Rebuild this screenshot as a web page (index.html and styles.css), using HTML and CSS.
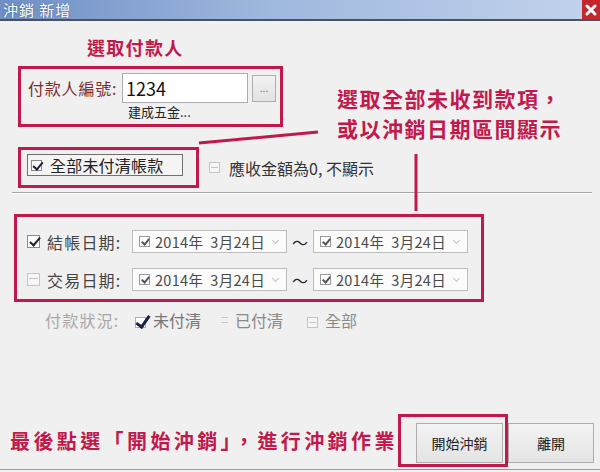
FILE: index.html
```html
<!DOCTYPE html>
<html lang="zh-Hant">
<head>
    <meta charset="UTF-8">
    <title>沖銷 新增</title>
    <link rel="stylesheet" href="styles.css">
</head>
<body>
    <div class="window">
        <div class="titlebar">
            <span class="title">沖銷 新增</span>
            <span class="close">
                <svg width="12" height="12" viewBox="0 0 12 12"><path d="M2 2 L10 10 M10 2 L2 10" stroke="#fff" stroke-width="3" stroke-linecap="round"/></svg>
            </span>
        </div>

        <div class="content">
            <div class="note note-payer">選取付款人</div>

            <div class="mark payer-box">
                <div class="payer-row">
                    <label class="payer-label" for="payer">付款人編號:</label>
                    <input class="text-input" id="payer" type="text" value="1234">
                    <button class="dots">...</button>
                </div>
                <div class="payer-name">建成五金...</div>
            </div>

            <div class="unpaid-row">
                <div class="mark unpaid-box">
                    <div class="toggle"><span class="cb checked"></span>全部未付清帳款</div>
                </div>
                <div class="option"><span class="cb dash"></span>應收金額為0, 不顯示</div>
            </div>

            <div class="sep"></div>

            <div class="mark date-box">
                <div class="date-row">
                    <span class="cb checked"></span>
                    <span class="date-label">結帳日期:</span>
                    <div class="picker"><span class="cb small checked"></span><span class="date">2014年&nbsp; 3月24日</span><span class="chev"></span></div>
                    <span class="tilde">～</span>
                    <div class="picker"><span class="cb small checked"></span><span class="date">2014年&nbsp; 3月24日</span><span class="chev"></span></div>
                </div>
                <div class="date-row">
                    <span class="cb dash"></span>
                    <span class="date-label">交易日期:</span>
                    <div class="picker"><span class="cb small checked"></span><span class="date">2014年&nbsp; 3月24日</span><span class="chev"></span></div>
                    <span class="tilde">～</span>
                    <div class="picker"><span class="cb small checked"></span><span class="date">2014年&nbsp; 3月24日</span><span class="chev"></span></div>
                </div>
            </div>

            <div class="status-row">
                <span class="status-label">付款狀況:</span>
                <span class="cb bold-check"></span>
                <span class="status-item first">未付清</span>
                <span class="eq"></span>
                <span class="status-item">已付清</span>
                <span class="cb dash faint"></span>
                <span class="status-item">全部</span>
            </div>

            <div class="footer">
                <div class="note note-final">最後點選「開始沖銷」，進行沖銷作業</div>
                <div class="mark start-box"><button class="btn">開始沖銷</button></div>
                <button class="btn btn-exit">離開</button>
            </div>
            <div class="bottom-line"></div>
        </div>

        <div class="note note-range">選取全部未收到款項，<br>或以沖銷日期區間顯示</div>
        <svg class="leaders" width="600" height="472">
            <line x1="199" y1="143" x2="318" y2="132" stroke="#c2194c" stroke-width="3"/>
            <line x1="416" y1="154" x2="416" y2="211" stroke="#c2194c" stroke-width="3"/>
        </svg>
    </div>
</body>
</html>
```

FILE: styles.css
```css
body {
    margin: 0;
    background-color: #f0f0f0;
    font-family: "Noto Sans CJK TC", "Noto Sans", sans-serif;
    color: #333;
}
.window {
    position: relative;
    width: 600px;
    height: 472px;
    overflow: hidden;
    background-color: #f0f0f0;
}
.titlebar {
    height: 19px;
    display: flex;
    align-items: center;
    justify-content: space-between;
    background: linear-gradient(to right, #6f8fc5, #9fb8de 45%, #c3d3ec);
    border-bottom: 2px solid #4c525b;
}
.title {
    color: #fff;
    font-size: 15px;
    line-height: 19px;
    padding-left: 3px;
    letter-spacing: 1px;
    text-shadow: 0 0 2px rgba(40, 60, 100, 0.6);
}
.close {
    width: 18px;
    height: 19px;
    background-color: #c3262b;
    display: flex;
    align-items: center;
    justify-content: center;
}
.content {
    display: flex;
    flex-direction: column;
    align-items: flex-start;
}
.note {
    color: #c2194c;
    font-weight: bold;
}
.note-payer {
    margin: 13px 0 0 87px;
    font-size: 18px;
    line-height: 26px;
    letter-spacing: 1.3px;
}
.mark {
    border: 3px solid #c2194c;
}
.payer-box {
    margin: 6px 0 0 18px;
    height: 51px;
    padding: 4px 0 0 7px;
    box-sizing: content-box;
    width: 252px;
}
.payer-row {
    display: flex;
    align-items: center;
}
.payer-label {
    width: 94px;
    font-size: 16px;
    color: #7b2d2d;
    letter-spacing: 0.8px;
}
.text-input {
    width: 126px;
    height: 30px;
    box-sizing: border-box;
    border: 1px solid #abadb3;
    background-color: #fff;
    font-family: inherit;
    font-size: 18px;
    padding: 0 3px;
    color: #111;
}
.dots {
    width: 24px;
    height: 27px;
    margin-left: 4px;
    border: 1px solid #adadad;
    background: linear-gradient(#f2f2f2, #e2e2e2);
    font-size: 10px;
    color: #555;
    padding: 0;
}
.payer-name {
    margin-left: 100px;
    font-size: 13px;
    line-height: 17px;
    color: #222;
}
.unpaid-row {
    margin: 20px 0 0 18px;
    display: flex;
    align-items: center;
}
.unpaid-box {
    padding: 4px 0 0 6px;
    box-sizing: border-box;
    width: 181px;
    height: 41px;
}
.toggle {
    width: 156px;
    height: 22px;
    box-sizing: border-box;
    border: 1px solid #6f6f6f;
    background-color: #f4f4f4;
    display: flex;
    align-items: center;
    padding-left: 3px;
    font-size: 16px;
    letter-spacing: 0.2px;
    color: #222;
}
.toggle .cb {
    margin-right: 8px;
}
.option {
    margin-left: 10px;
    display: flex;
    align-items: center;
    font-size: 16px;
    color: #333;
}
.option .cb {
    margin-right: 9px;
}
.cb {
    position: relative;
    display: inline-block;
    width: 11px;
    height: 11px;
    box-sizing: border-box;
    border: 1px solid #8a8a8a;
    background-color: #fff;
    flex: none;
}
.cb.checked::after {
    content: "";
    position: absolute;
    left: 3px;
    top: -1px;
    width: 4px;
    height: 8px;
    border: solid #1e2233;
    border-width: 0 2px 2px 0;
    transform: rotate(40deg);
}
.cb.small {
    width: 11px;
    height: 11px;
    border-color: #9a9a9a;
}
.cb.small.checked::after {
    left: 3px;
    top: 0;
    width: 3px;
    height: 6px;
    border-color: #555;
}
.cb.dash {
    border-color: #c4c4c4;
    background-color: #f6f6f6;
}
.cb.dash::after {
    content: "";
    position: absolute;
    left: 1px;
    right: 1px;
    top: 4px;
    height: 1px;
    background-color: #c4c4c4;
}
.sep {
    margin: 4px 0 0 12px;
    width: 580px;
    height: 1px;
    background-color: #a5a5a5;
    border-bottom: 1px solid #fff;
}
.date-box {
    margin: 20px 0 0 14px;
    width: 470px;
    height: 88px;
    box-sizing: border-box;
    padding: 13px 0 0 10px;
    display: flex;
    flex-direction: column;
    gap: 15px;
}
.date-row {
    display: flex;
    align-items: center;
    height: 23px;
}
.date-row > .cb {
    width: 13px;
    height: 13px;
}
.date-row > .cb.checked::after {
    left: 4px;
    top: -1px;
    width: 4px;
    height: 9px;
}
.date-label {
    margin-left: 7px;
    width: 85px;
    font-size: 16px;
    letter-spacing: 1.2px;
    color: #444;
}
.picker {
    width: 155px;
    height: 23px;
    box-sizing: border-box;
    border: 1px solid #bdbdbd;
    background-color: #fbfbfb;
    display: flex;
    align-items: center;
    padding-left: 6px;
}
.date {
    margin-left: 5px;
    font-size: 14.5px;
    letter-spacing: 0.3px;
    color: #4a4a4a;
    flex: 1;
}
.chev {
    width: 4px;
    height: 4px;
    margin: 0 8px 3px 0;
    border: solid #c4c4c4;
    border-width: 0 1px 1px 0;
    transform: rotate(45deg);
}
.tilde {
    width: 26px;
    text-align: center;
    font-size: 16px;
    color: #222;
}
.status-row {
    margin: 8px 0 0 45px;
    height: 20px;
    display: flex;
    align-items: center;
    font-size: 16px;
}
.status-label {
    width: 90px;
    color: #a8a8a8;
    letter-spacing: 1.2px;
}
.cb.bold-check {
    border-color: #b0b0b0;
    margin-top: 4px;
}
.cb.bold-check::after {
    content: "";
    position: absolute;
    left: 3px;
    top: -5px;
    width: 5px;
    height: 12px;
    border: solid #1a2340;
    border-width: 0 3px 3px 0;
    transform: rotate(35deg);
}
.status-item {
    color: #8a8a8a;
    margin-left: 7px;
}
.status-item.first {
    color: #777;
}
.eq {
    position: relative;
    width: 7px;
    height: 4px;
    margin-left: 20px;
    border-top: 1px solid #c8c8c8;
    border-bottom: 1px solid #c8c8c8;
}
.cb.faint {
    margin-left: 24px;
    margin-top: 4px;
}
.footer {
    margin-top: 84px;
    padding-left: 10px;
    display: flex;
    align-items: center;
}
.note-final {
    font-size: 20px;
    letter-spacing: 3.4px;
    line-height: 26px;
    width: 388px;
    white-space: nowrap;
}
.start-box {
    width: 110px;
    height: 53px;
    box-sizing: border-box;
    padding: 6px 0 0 15px;
}
.btn {
    width: 87px;
    height: 40px;
    border: 1px solid #adadad;
    background: linear-gradient(#f3f3f3, #e4e4e4);
    font-family: inherit;
    font-size: 14px;
    color: #222;
    padding: 0;
}
.btn-exit {
    width: 86px;
    margin-top: 5px;
}
.bottom-line {
    width: 600px;
    height: 1px;
    margin-top: 2px;
    background-color: #9a9a9a;
}
.note-range {
    position: absolute;
    left: 337px;
    top: 83px;
    font-size: 21px;
    line-height: 30px;
    letter-spacing: 1.5px;
}
.leaders {
    position: absolute;
    left: 0;
    top: 0;
    pointer-events: none;
}
```
